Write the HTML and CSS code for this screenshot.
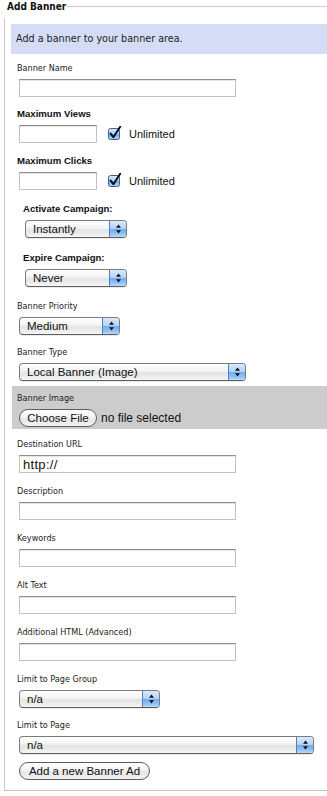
FILE: index.html
```html
<!DOCTYPE html>
<html>
<head>
<meta charset="utf-8">
<title>Add Banner</title>
<link rel="stylesheet" href="styles.css">
</head>
<body>
<div class="panel">
  <div class="panel-head"><span class="legend">Add Banner</span><span class="rule"></span></div>
  <div class="panel-body">
    <div class="intro">Add a banner to your banner area.</div>

    <div class="field mt7">
      <label class="lbl">Banner Name</label>
      <input class="txt" type="text">
    </div>

    <div class="field mt10">
      <label class="lbl lbl-b">Maximum Views</label>
      <div class="check-row">
        <input class="txt txt-short" type="text">
        <svg class="cb" width="14" height="14" viewBox="0 0 14 14"><defs><linearGradient id="cbg1" x1="0" y1="0" x2="0" y2="1"><stop offset="0" stop-color="#dcebfd"/><stop offset="0.5" stop-color="#a9cdf5"/><stop offset="0.51" stop-color="#6eaaee"/><stop offset="1" stop-color="#b4d8fb"/></linearGradient></defs><rect x="0.5" y="2.5" width="11" height="11" rx="2" fill="url(#cbg1)" stroke="#3e5f92"/><path d="M2.6 7.6 L5.4 11.2 L12.2 0.8" fill="none" stroke="#0d0d14" stroke-width="2" stroke-linecap="round" stroke-linejoin="round"/></svg>
        <span class="cb-text">Unlimited</span>
      </div>
    </div>

    <div class="field mt11">
      <label class="lbl lbl-b">Maximum Clicks</label>
      <div class="check-row">
        <input class="txt txt-short" type="text">
        <svg class="cb" width="14" height="14" viewBox="0 0 14 14"><defs><linearGradient id="cbg2" x1="0" y1="0" x2="0" y2="1"><stop offset="0" stop-color="#dcebfd"/><stop offset="0.5" stop-color="#a9cdf5"/><stop offset="0.51" stop-color="#6eaaee"/><stop offset="1" stop-color="#b4d8fb"/></linearGradient></defs><rect x="0.5" y="2.5" width="11" height="11" rx="2" fill="url(#cbg2)" stroke="#3e5f92"/><path d="M2.6 7.6 L5.4 11.2 L12.2 0.8" fill="none" stroke="#0d0d14" stroke-width="2" stroke-linecap="round" stroke-linejoin="round"/></svg>
        <span class="cb-text">Unlimited</span>
      </div>
    </div>

    <div class="field indent mt12">
      <label class="lbl lbl-b">Activate Campaign:</label>
      <div class="popup w-short"><span class="popup-text">Instantly</span><span class="popup-btn"><svg width="7" height="10" viewBox="0 0 7 10"><path d="M3.5 0.5 L6 3.8 L1 3.8 Z M3.5 9.5 L6 6.2 L1 6.2 Z" fill="#111"/></svg></span></div>
    </div>

    <div class="field indent mt13">
      <label class="lbl lbl-b">Expire Campaign:</label>
      <div class="popup w-short"><span class="popup-text">Never</span><span class="popup-btn"><svg width="7" height="10" viewBox="0 0 7 10"><path d="M3.5 0.5 L6 3.8 L1 3.8 Z M3.5 9.5 L6 6.2 L1 6.2 Z" fill="#111"/></svg></span></div>
    </div>

    <div class="field mt12">
      <label class="lbl">Banner Priority</label>
      <div class="popup w-med"><span class="popup-text">Medium</span><span class="popup-btn"><svg width="7" height="10" viewBox="0 0 7 10"><path d="M3.5 0.5 L6 3.8 L1 3.8 Z M3.5 9.5 L6 6.2 L1 6.2 Z" fill="#111"/></svg></span></div>
    </div>

    <div class="field mt10">
      <label class="lbl">Banner Type</label>
      <div class="popup w-type"><span class="popup-text">Local Banner (Image)</span><span class="popup-btn"><svg width="7" height="10" viewBox="0 0 7 10"><path d="M3.5 0.5 L6 3.8 L1 3.8 Z M3.5 9.5 L6 6.2 L1 6.2 Z" fill="#111"/></svg></span></div>
    </div>

    <div class="field upload">
      <label class="lbl">Banner Image</label>
      <div class="file-row">
        <button class="pill pill-file" type="button">Choose File</button>
        <span class="file-status">no file selected</span>
      </div>
    </div>

    <div class="field mt8">
      <label class="lbl">Destination URL</label>
      <input class="txt txt-url" type="text" value="http://">
    </div>

    <div class="field mt11">
      <label class="lbl">Description</label>
      <input class="txt" type="text">
    </div>

    <div class="field mt11">
      <label class="lbl">Keywords</label>
      <input class="txt" type="text">
    </div>

    <div class="field mt11">
      <label class="lbl">Alt Text</label>
      <input class="txt" type="text">
    </div>

    <div class="field mt11">
      <label class="lbl">Additional HTML (Advanced)</label>
      <input class="txt" type="text">
    </div>

    <div class="field mt11">
      <label class="lbl">Limit to Page Group</label>
      <div class="popup w-group"><span class="popup-text">n/a</span><span class="popup-btn"><svg width="7" height="10" viewBox="0 0 7 10"><path d="M3.5 0.5 L6 3.8 L1 3.8 Z M3.5 9.5 L6 6.2 L1 6.2 Z" fill="#111"/></svg></span></div>
    </div>

    <div class="field mt10">
      <label class="lbl">Limit to Page</label>
      <div class="popup w-page"><span class="popup-text">n/a</span><span class="popup-btn"><svg width="7" height="10" viewBox="0 0 7 10"><path d="M3.5 0.5 L6 3.8 L1 3.8 Z M3.5 9.5 L6 6.2 L1 6.2 Z" fill="#111"/></svg></span></div>
    </div>

    <div class="field submit-row">
      <button class="pill pill-submit" type="button">Add a new Banner Ad</button>
    </div>
  </div>
</div>
</body>
</html>
```

FILE: styles.css
```css
html, body {
  margin: 0;
  padding: 0;
  background: #ffffff;
  overflow: hidden;
}

body {
  font-family: "DejaVu Sans Condensed", "DejaVu Sans", sans-serif;
  color: #222222;
}

.panel {
  margin-left: 4px;
}

.panel-head {
  display: flex;
  align-items: flex-start;
  height: 18px;
  padding-left: 3px;
}

.legend {
  font-family: "DejaVu Sans Condensed", "DejaVu Sans", sans-serif;
  font-weight: bold;
  font-size: 10px;
  line-height: 14px;
  color: #111111;
  padding-right: 1px;
}

.rule {
  flex: 1;
  height: 1px;
  margin-top: 6px;
  background: #cccccc;
}

.panel-body {
  border-left: 1px solid #cccccc;
  border-bottom: 1px solid #c4c4c4;
  padding: 6px 0 10px 6px;
  display: flex;
  flex-direction: column;
}

.intro {
  height: 30px;
  line-height: 30px;
  padding-left: 5px;
  background: #d5dcf6;
  font-size: 10.7px;
  color: #1e1e1e;
}

.field {
  display: flex;
  flex-direction: column;
  align-items: flex-start;
  gap: 4px;
  padding-left: 6px;
}

.field.indent {
  padding-left: 12px;
}

.mt7 { margin-top: 7px; }
.mt8 { margin-top: 8px; }
.mt10 { margin-top: 10px; }
.mt11 { margin-top: 11px; }
.mt12 { margin-top: 12px; }
.mt13 { margin-top: 13px; }

.lbl {
  display: block;
  font-size: 9px;
  line-height: 14px;
  height: 14px;
  color: #222222;
}

.lbl-b {
  font-family: "Liberation Sans", Arial, sans-serif;
  font-weight: bold;
  font-size: 9.6px;
  color: #111111;
}

.txt {
  box-sizing: border-box;
  margin: 0 0 0 2px;
  width: 217px;
  height: 18px;
  border: 1px solid #c2c2c2;
  border-top-color: #8e8e8e;
  box-shadow: inset 0 1px 0 #e4e4e4;
  background: #ffffff;
  padding: 0 3px;
  font-family: "Liberation Sans", Arial, sans-serif;
  font-size: 12px;
  color: #111111;
  outline: none;
}

.txt-short {
  width: 78px;
}

.txt-url {
  font-size: 13px;
  letter-spacing: 0.3px;
}

.check-row {
  display: flex;
  align-items: center;
  height: 18px;
}

.cb {
  display: block;
  margin-left: 11px;
  margin-top: -2px;
}

.cb-text {
  margin-left: 7px;
  font-family: "Liberation Sans", Arial, sans-serif;
  font-size: 11px;
  color: #111111;
}

.popup {
  box-sizing: border-box;
  display: flex;
  margin-left: 2px;
  height: 18px;
  border: 1px solid #7c7c7c;
  border-bottom-color: #5e5e5e;
  border-radius: 4px;
  overflow: hidden;
  background: linear-gradient(to bottom, #ffffff 0%, #f3f3f3 45%, #e3e3e3 55%, #eeeeee 85%, #f8f8f8 100%);
  box-shadow: 0 1px 0 rgba(0, 0, 0, 0.08);
}

.w-short { width: 102px; }
.w-med { width: 101px; }
.w-type { width: 227px; }
.w-group { width: 141px; }
.w-page { width: 295px; }

.popup-text {
  flex: 1;
  padding-left: 7px;
  font-family: "Liberation Sans", Arial, sans-serif;
  font-size: 11.5px;
  line-height: 16px;
  color: #111111;
  white-space: nowrap;
}

.popup-btn {
  width: 16px;
  display: flex;
  align-items: center;
  justify-content: center;
  border-left: 1px solid #4f7fbf;
  background: linear-gradient(to bottom, #d8e9fd 0%, #b2d3f8 48%, #70acef 52%, #8fc1f5 80%, #b9dcfc 100%);
}

.popup-btn svg {
  display: block;
}

.upload {
  margin-top: 5px;
  margin-left: 1px;
  padding: 5px 0 2px 5px;
  background: #cccccc;
}

.file-row {
  display: flex;
  align-items: center;
  margin-left: 2px;
}

.pill {
  box-sizing: border-box;
  height: 18px;
  padding: 0;
  border: 1px solid #5c5c5c;
  border-radius: 9px;
  background: linear-gradient(to bottom, #ffffff 0%, #f4f4f4 45%, #e6e6e6 55%, #f2f2f2 100%);
  font-family: "Liberation Sans", Arial, sans-serif;
  font-size: 11.5px;
  line-height: 16px;
  color: #111111;
  text-align: center;
}

.pill-file {
  width: 78px;
}

.file-status {
  margin-left: 4px;
  font-family: "Liberation Sans", Arial, sans-serif;
  font-size: 12px;
  color: #111111;
}

.submit-row {
  margin-top: 8px;
}

.pill-submit {
  margin-left: 2px;
  width: 131px;
}
```
